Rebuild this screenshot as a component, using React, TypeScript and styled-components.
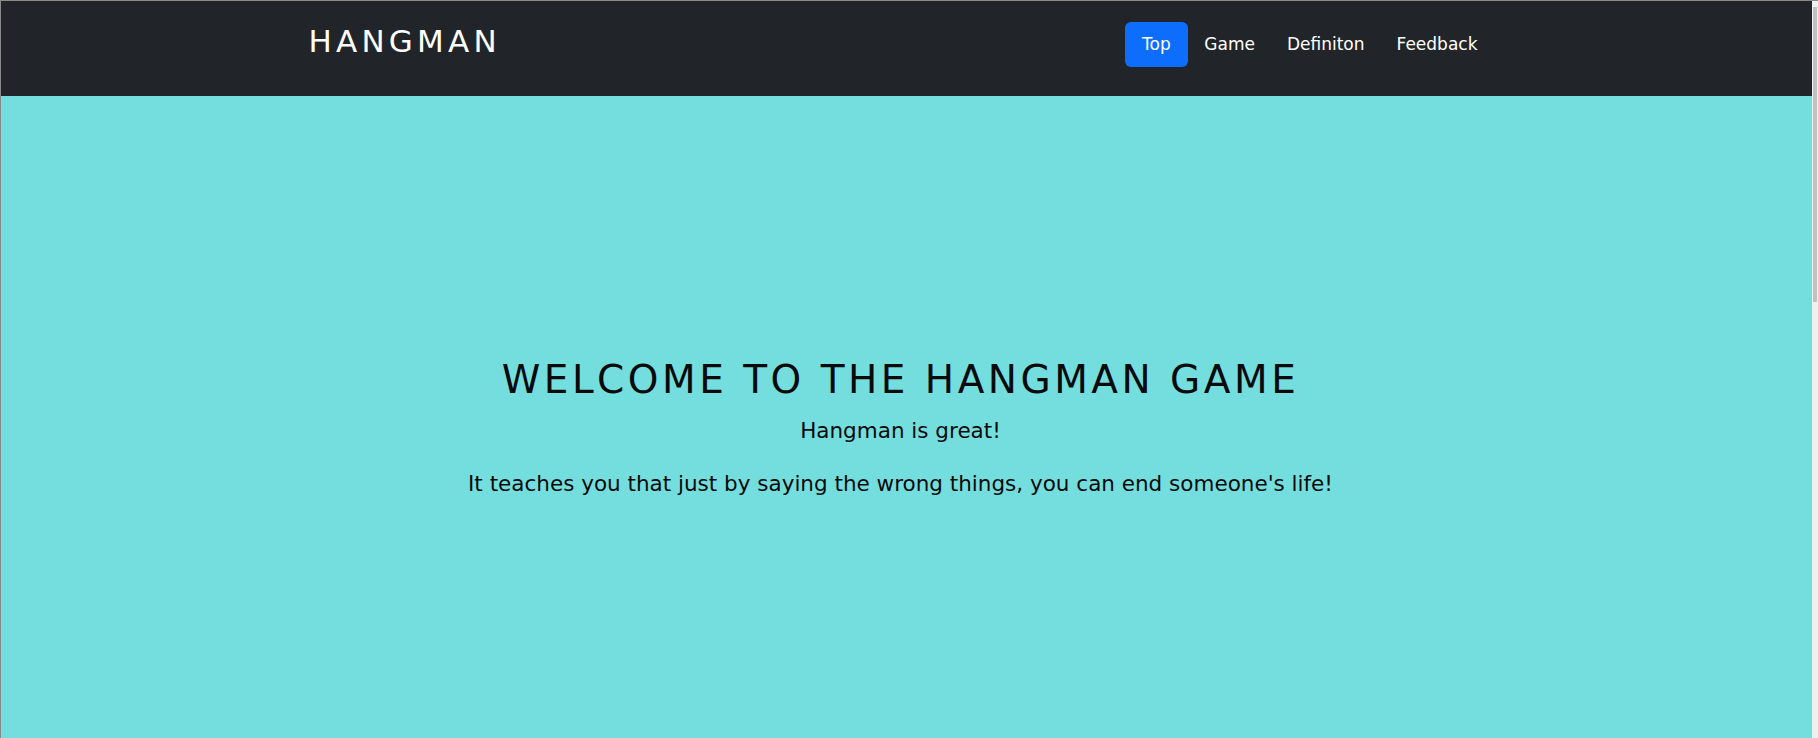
import React from "react";
import styled, { createGlobalStyle } from "styled-components";

const Global = createGlobalStyle`
  html, body { margin: 0; padding: 0; height: 100%; overflow: hidden; }
  body { font-family: "DejaVu Sans", "Liberation Sans", sans-serif; background: #f0f0f0; }
  #root { height: 100%; }
`;

const Frame = styled.div`
  display: flex;
  height: 738px;
  border-top: 1px solid #8a8a8a;
  box-sizing: border-box;
`;

const Page = styled.div`
  flex: 1;
  display: flex;
  flex-direction: column;
  border-left: 1px solid #8a8a8a;
  min-width: 0;
`;

const Rail = styled.div`
  width: 6px;
  background: #f0f0f0;
  display: flex;
  justify-content: flex-end;
  padding-top: 6px;
  box-sizing: border-box;
`;

const Thumb = styled.div`
  width: 4px;
  height: 295px;
  background: #c1c1c1;
  margin-right: 1px;
`;

const Navbar = styled.nav`
  background: #212529;
  height: 95px;
  flex-shrink: 0;
`;

const Container = styled.div`
  width: 1200px;
  margin: 0 auto;
  height: 100%;
  display: flex;
  align-items: flex-start;
  justify-content: space-between;
  box-sizing: border-box;
  padding: 0 13px 0 2px;
`;

const Brand = styled.a`
  color: #ffffff;
  font-size: 31px;
  letter-spacing: 4.2px;
  margin-top: 20px;
  line-height: 40px;
  text-decoration: none;
`;

const NavList = styled.ul`
  list-style: none;
  display: flex;
  margin: 21px 0 0 0;
  padding: 0;
`;

const NavLink = styled.a<{ $active?: boolean }>`
  display: block;
  color: #ffffff;
  font-size: 17px;
  line-height: 45px;
  padding: 0 ${(p) => (p.$active ? "17.5px" : "16px")};
  border-radius: 6px;
  background: ${(p) => (p.$active ? "#0d6efd" : "transparent")};
  text-decoration: none;
`;

const Hero = styled.section`
  flex: 1;
  background: #74dede;
  display: flex;
  flex-direction: column;
  align-items: center;
  padding: 260px 12px 0 0;
  color: #0a0a0a;
`;

const Title = styled.h1`
  margin: 0;
  font-weight: 400;
  font-size: 39px;
  letter-spacing: 3.5px;
  line-height: 48px;
`;

const Lead = styled.p`
  margin: 13px 0 0 0;
  font-size: 21.5px;
  line-height: 28px;
`;

const Body = styled.p`
  margin: 25px 0 0 0;
  font-size: 21.5px;
  line-height: 28px;
`;

export default function App() {
  const links = ["Top", "Game", "Definiton", "Feedback"];
  return (
    <>
      <Global />
      <Frame>
        <Page>
          <Navbar>
            <Container>
              <Brand href="#">HANGMAN</Brand>
              <NavList>
                {links.map((l, i) => (
                  <li key={l}>
                    <NavLink href="#" $active={i === 0}>
                      {l}
                    </NavLink>
                  </li>
                ))}
              </NavList>
            </Container>
          </Navbar>
          <Hero>
            <Title>WELCOME TO THE HANGMAN GAME</Title>
            <Lead>Hangman is great!</Lead>
            <Body>It teaches you that just by saying the wrong things, you can end someone's life!</Body>
          </Hero>
        </Page>
        <Rail>
          <Thumb />
        </Rail>
      </Frame>
    </>
  );
}
